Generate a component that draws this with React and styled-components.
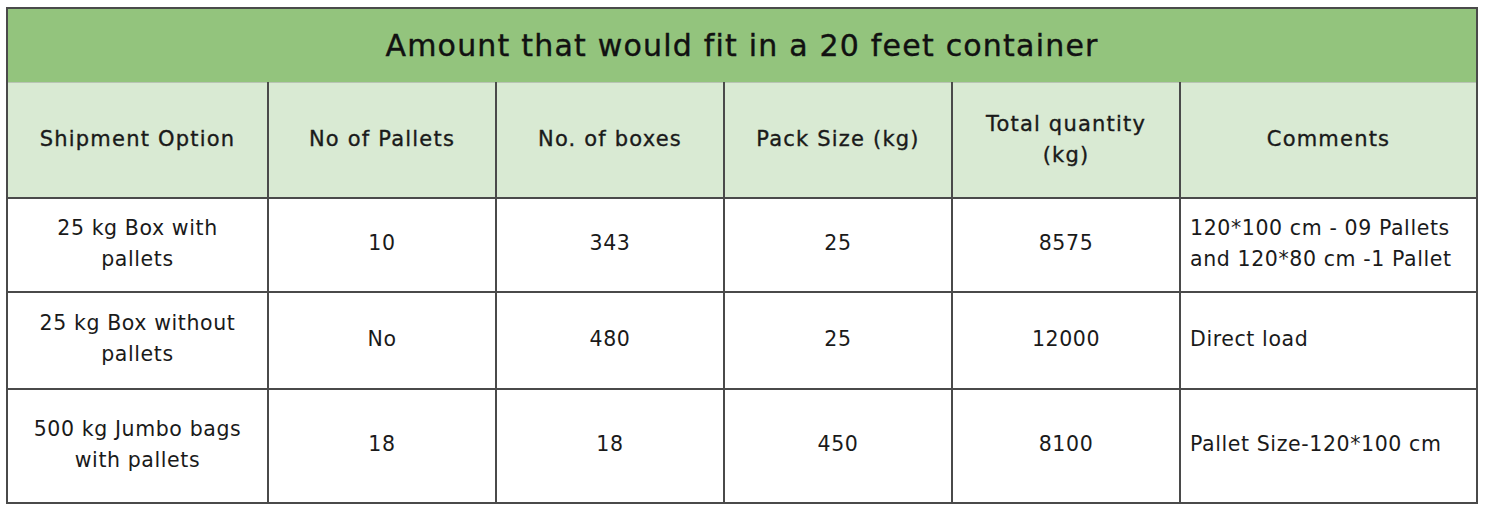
import React from "react";
import styled, { createGlobalStyle } from "styled-components";

const GlobalStyle = createGlobalStyle`
  html, body {
    margin: 0;
    padding: 0;
    background: #fff;
  }
  body {
    font-family: "DejaVu Sans", "Noto Sans", sans-serif;
    color: #111;
  }
`;

const Page = styled.div`
  padding: 7px 9px 0 6px;
`;

const Table = styled.table`
  width: 1470px;
  border-collapse: collapse;
  table-layout: fixed;
  border: 2px solid #4a4a4a;
`;

const TitleCell = styled.th`
  height: 73px;
  background: #93c47d;
  font-size: 30px;
  font-weight: 400;
  letter-spacing: 1.2px;
  -webkit-text-stroke: 0.4px #111;
  text-align: center;
  color: #111;
  border-bottom: 1.5px solid #b9c4b4;
  padding: 0;
`;

const HeadRow = styled.tr`
  height: 115px;
  background: #d9ead3;
`;

const HeadCell = styled.th`
  font-size: 21px;
  font-weight: 400;
  letter-spacing: 1.2px;
  -webkit-text-stroke: 0.35px #1a1a1a;
  line-height: 31px;
  text-align: center;
  vertical-align: middle;
  border-left: 2px solid #4a4a4a;
  padding: 0 12px;
  color: #1a1a1a;
  &:first-child {
    border-left: none;
  }
`;

const BodyRow = styled.tr`
  height: ${({ h }) => h}px;
  border-top: 2px solid #4a4a4a;
`;

const Cell = styled.td`
  font-size: 20.5px;
  font-weight: 400;
  letter-spacing: 0.6px;
  line-height: 31px;
  text-align: ${({ left }) => (left ? "left" : "center")};
  vertical-align: middle;
  padding: ${({ left }) => (left ? "0 8px 2px 9px" : "0 12px 2px")};
  border-left: 2px solid #4a4a4a;
  color: #1a1a1a;
  &:first-child {
    border-left: none;
  }
`;

const cols = [261, 228, 228, 228, 228, 297];

const heads = [
  "Shipment Option",
  "No of Pallets",
  "No. of boxes",
  "Pack Size (kg)",
  "Total quantity (kg)",
  "Comments",
];

const rows = [
  {
    h: 94,
    cells: [
      "25 kg Box with pallets",
      "10",
      "343",
      "25",
      "8575",
      "120*100 cm - 09 Pallets and 120*80 cm -1 Pallet",
    ],
  },
  {
    h: 97,
    cells: ["25 kg Box without pallets", "No", "480", "25", "12000", "Direct load"],
  },
  {
    h: 114,
    cells: [
      "500 kg Jumbo bags with pallets",
      "18",
      "18",
      "450",
      "8100",
      "Pallet Size-120*100 cm",
    ],
  },
];

export default function App() {
  return (
    <Page>
      <GlobalStyle />
      <Table>
        <colgroup>
          {cols.map((w, i) => (
            <col key={i} style={{ width: w }} />
          ))}
        </colgroup>
        <thead>
          <tr>
            <TitleCell colSpan={6}>Amount that would fit in a 20 feet container</TitleCell>
          </tr>
          <HeadRow>
            {heads.map((t) => (
              <HeadCell key={t}>{t}</HeadCell>
            ))}
          </HeadRow>
        </thead>
        <tbody>
          {rows.map((r, ri) => (
            <BodyRow key={ri} h={r.h}>
              {r.cells.map((c, ci) => (
                <Cell key={ci} left={ci === 5}>
                  {c}
                </Cell>
              ))}
            </BodyRow>
          ))}
        </tbody>
      </Table>
    </Page>
  );
}
